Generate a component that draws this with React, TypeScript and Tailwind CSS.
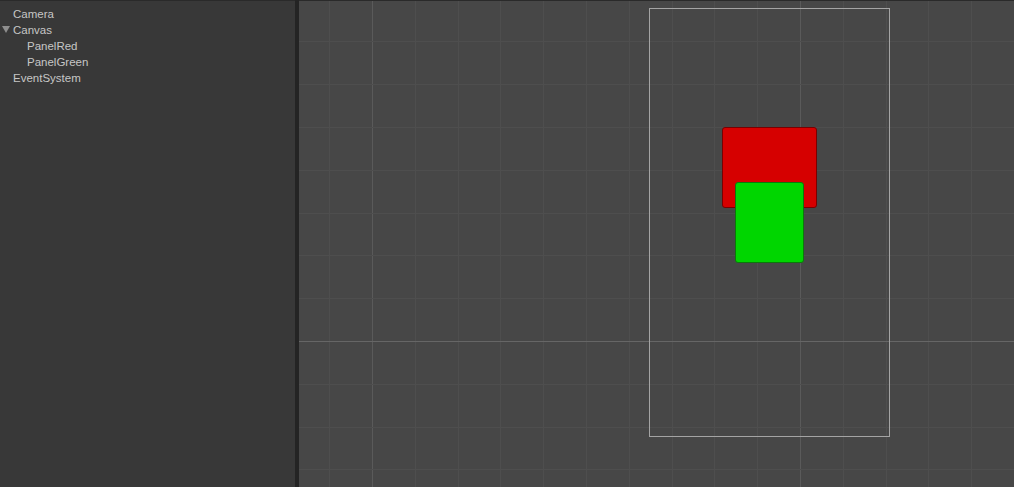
import React from "react";

const S = 42.8;

function Grid() {
  const v: number[] = [];
  for (let k = -2; k <= 15; k++) v.push(372 - 299 + S * k);
  const h: number[] = [];
  for (let k = -8; k <= 4; k++) h.push(340 + S * k);
  return (
    <svg className="absolute inset-0" width="715" height="487" shapeRendering="crispEdges">
      {v.map((x, i) => {
        const major = Math.abs(x - 73) < 0.5 || Math.abs(x - 501) < 0.5;
        return (
          <line
            key={"v" + i}
            x1={Math.round(x) + 0.5}
            x2={Math.round(x) + 0.5}
            y1={0}
            y2={487}
            stroke={major ? "#5a5a5a" : "#4e4e4e"}
            strokeWidth={1}
          />
        );
      })}
      {h.map((y, i) => {
        const major = Math.abs(y - 340) < 0.5;
        return (
          <line
            key={"h" + i}
            y1={Math.round(y) + 0.5}
            y2={Math.round(y) + 0.5}
            x1={0}
            x2={715}
            stroke={major ? "#666666" : "#4e4e4e"}
            strokeWidth={1}
          />
        );
      })}
    </svg>
  );
}

export default function App() {
  const font = { fontFamily: '"Liberation Sans", Arial, sans-serif' };
  return (
    <div className="flex h-[487px] w-[1014px] overflow-hidden bg-[#383838]">
      <div className="w-[295px] shrink-0 border-t border-[#2a2a2a] bg-[#383838] pt-[5px] text-[11.5px] leading-[16px] text-[#c6c6c6]" style={font}>
        <div className="pl-[13px]">Camera</div>
        <div className="flex items-center">
          <svg width="13" height="16" viewBox="0 0 13 16" className="shrink-0">
            <polygon points="2,4 10,4 6,11" fill="#8e8e8e" />
          </svg>
          <span>Canvas</span>
        </div>
        <div className="pl-[27px]">PanelRed</div>
        <div className="pl-[27px]">PanelGreen</div>
        <div className="pl-[13px]">EventSystem</div>
      </div>
      <div className="w-[4px] shrink-0 bg-[#242424]" />
      <div className="relative h-[487px] flex-1 overflow-hidden border-t border-[#2a2a2a] bg-[#474747]">
        <Grid />
        <div className="absolute left-[350px] top-[7px] h-[429px] w-[241px] border border-[#a4a4a4]" />
        <div className="absolute left-[423px] top-[126px] h-[81px] w-[95px] rounded-[3px] border border-[#7a0000] bg-[#d60000]" />
        <div className="absolute left-[436px] top-[181px] h-[81px] w-[69px] rounded-[3px] border border-[#0a7a0a] bg-[#00d600]" />
      </div>
    </div>
  );
}
